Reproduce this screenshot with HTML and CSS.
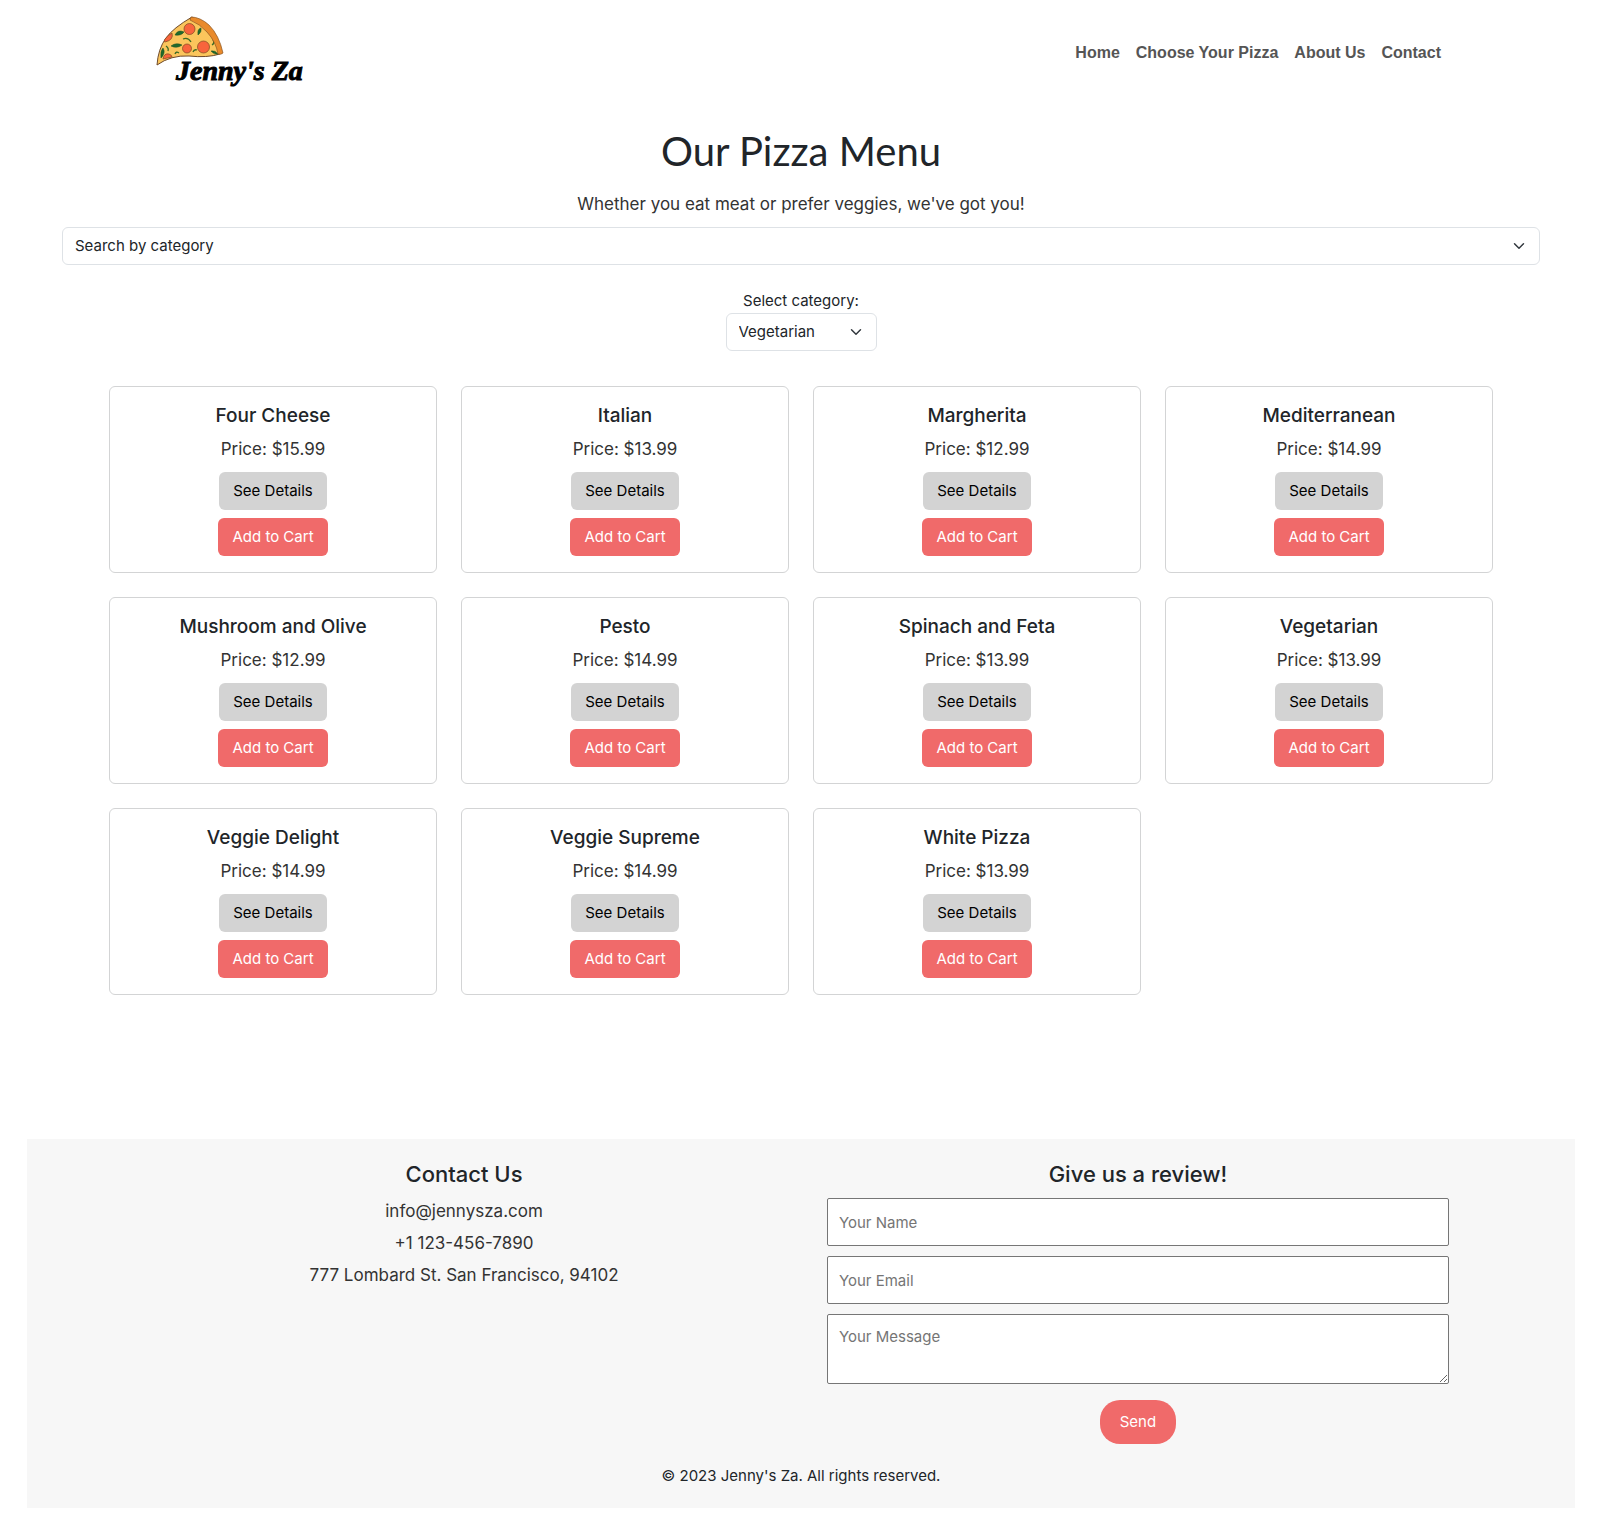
FILE: index.html
```html
<!DOCTYPE html>
<html lang="en">
<head>
<meta charset="utf-8">
<meta name="viewport" content="width=device-width, initial-scale=1">
<title>Jenny's Za - Our Pizza Menu</title>
<link rel="stylesheet" href="styles.css">
</head>
<body>
<header class="site-header">
  <a class="logo" href="#" aria-label="Jenny's Za">
    <svg class="logo-art" width="150" height="90" viewBox="0 0 150 90" aria-hidden="true">
      <path d="M39 16 Q20 27 13 37 Q5 48 4 64 Q18 54 36 55 Q54 57 67 53 Q66 40 57 30 Q49 21 39 16Z" fill="#fbc55c" stroke="#6e4a2b" stroke-width="1"/>
      <g fill="#f8643c" stroke="#7d4a22" stroke-width=".7">
        <circle cx="36.500" cy="28" r="5.500"/>
        <circle cx="50.500" cy="46" r="6"/>
        <circle cx="34" cy="47.500" r="4.500"/>
        <path d="M12 38 Q15 34 19 32 Q21 39 12 41 Q10 41 12 38Z"/>
        <path d="M10 58 Q11 52 16 53 Q19 54 19 56 Q14 57 10 58Z"/>
      </g>
      <g fill="#1f6b2c" stroke="#174d20" stroke-width=".5">
        <path d="M22 34 Q25 28 31 31 Q28 35 22 34Z"/>
        <path d="M45 34 Q44 28 48 27 Q49 31 45 34Z"/>
        <path d="M18 45 Q23 41 29 44 Q24 48 18 45Z"/>
        <path d="M8 57 Q7 50 10 47 Q13 52 8 57Z"/>
        <path d="M58 50 Q62 49 65 53 Q61 54 58 50Z"/>
      </g>
      <path d="M30 38 Q35 36 38 41 M59 44 Q62 42 60 39 M13 45 Q16 47 15 50 M40 51 Q41 48 44 49 M22 53 Q23 50 26 52" fill="none" stroke="#3c6b25" stroke-width="1.300"/>
      <path d="M38 16 Q47 16 56 24 Q66 34 70 52 Q68 54 65 53 Q63 41 54 31 Q47 23 37 19Z" fill="#e98a2b" stroke="#8a5423" stroke-width=".7"/>
      <text class="logo-name" x="23" y="79">Jenny's Za</text>
    </svg>
  </a>
  <nav class="site-nav">
    <a href="#">Home</a>
    <a href="#">Choose Your Pizza</a>
    <a href="#">About Us</a>
    <a href="#contact">Contact</a>
  </nav>
</header>

<main class="menu">
  <h1 class="menu-title">Our Pizza Menu</h1>
  <p class="text menu-intro">Whether you eat meat or prefer veggies, we've got you!</p>
  <select class="select" aria-label="Search by category">
    <option>Search by category</option>
  </select>
  <div class="category">
    <label for="category">Select category:</label>
    <select class="select select-small" id="category">
      <option>Vegetarian</option>
    </select>
  </div>
  <div class="cards">
    <article class="card"><h2 class="card-title">Four Cheese</h2><p class="text card-price">Price: $15.99</p><button class="btn btn-details">See Details</button><button class="btn btn-cart">Add to Cart</button></article>
    <article class="card"><h2 class="card-title">Italian</h2><p class="text card-price">Price: $13.99</p><button class="btn btn-details">See Details</button><button class="btn btn-cart">Add to Cart</button></article>
    <article class="card"><h2 class="card-title">Margherita</h2><p class="text card-price">Price: $12.99</p><button class="btn btn-details">See Details</button><button class="btn btn-cart">Add to Cart</button></article>
    <article class="card"><h2 class="card-title">Mediterranean</h2><p class="text card-price">Price: $14.99</p><button class="btn btn-details">See Details</button><button class="btn btn-cart">Add to Cart</button></article>
    <article class="card"><h2 class="card-title">Mushroom and Olive</h2><p class="text card-price">Price: $12.99</p><button class="btn btn-details">See Details</button><button class="btn btn-cart">Add to Cart</button></article>
    <article class="card"><h2 class="card-title">Pesto</h2><p class="text card-price">Price: $14.99</p><button class="btn btn-details">See Details</button><button class="btn btn-cart">Add to Cart</button></article>
    <article class="card"><h2 class="card-title">Spinach and Feta</h2><p class="text card-price">Price: $13.99</p><button class="btn btn-details">See Details</button><button class="btn btn-cart">Add to Cart</button></article>
    <article class="card"><h2 class="card-title">Vegetarian</h2><p class="text card-price">Price: $13.99</p><button class="btn btn-details">See Details</button><button class="btn btn-cart">Add to Cart</button></article>
    <article class="card"><h2 class="card-title">Veggie Delight</h2><p class="text card-price">Price: $14.99</p><button class="btn btn-details">See Details</button><button class="btn btn-cart">Add to Cart</button></article>
    <article class="card"><h2 class="card-title">Veggie Supreme</h2><p class="text card-price">Price: $14.99</p><button class="btn btn-details">See Details</button><button class="btn btn-cart">Add to Cart</button></article>
    <article class="card"><h2 class="card-title">White Pizza</h2><p class="text card-price">Price: $13.99</p><button class="btn btn-details">See Details</button><button class="btn btn-cart">Add to Cart</button></article>
  </div>
</main>

<footer class="site-footer" id="contact">
  <div class="footer-columns">
    <section class="footer-column">
      <h2 class="footer-title">Contact Us</h2>
      <p class="text footer-line">info@jennysza.com</p>
      <p class="text footer-line">+1 123-456-7890</p>
      <p class="text footer-line">777 Lombard St. San Francisco, 94102</p>
    </section>
    <section class="footer-column">
      <h2 class="footer-title">Give us a review!</h2>
      <form class="review">
        <input class="field" type="text" placeholder="Your Name" aria-label="Your Name">
        <input class="field" type="email" placeholder="Your Email" aria-label="Your Email">
        <textarea class="field field-message" placeholder="Your Message" aria-label="Your Message"></textarea>
        <button class="send" type="submit">Send</button>
      </form>
    </section>
  </div>
  <p class="copyright">© 2023 Jenny's Za. All rights reserved.</p>
</footer>
</body>
</html>
```

FILE: styles.css
```css
*, *::before, *::after { box-sizing: border-box; }

body {
  margin: 0;
  padding: 0 27px 27px;
  background: #fff;
  color: #212529;
  font-family: Inter, "Liberation Sans", sans-serif;
  font-size: 15px;
  line-height: 24px;
}

h1, h2, p { margin: 0; }

button, input, select, textarea {
  font: inherit;
}

.text {
  color: #333;
  font-size: 17px;
  line-height: 26px;
}

/* Header */
.site-header {
  display: flex;
  align-items: center;
  justify-content: space-between;
  max-width: 1296px;
  height: 105px;
  margin: 0 auto;
  padding-top: 1px;
}

.logo { align-self: flex-start; }

.logo-art { display: block; }

.logo-name {
  fill: #000;
  stroke: #000;
  stroke-width: 1px;
  font-family: "Liberation Serif", serif;
  font-size: 28px;
  font-style: italic;
  font-weight: 700;
}

.site-nav { display: flex; }

.site-nav a {
  padding: 8px;
  color: #555;
  font-family: "Liberation Sans", Arial, sans-serif;
  font-size: 16px;
  font-weight: 700;
  text-decoration: none;
}

/* Menu */
.menu {
  padding: 22px 35px 144px;
  text-align: center;
}

.menu-title {
  margin-bottom: 16px;
  font-family: Lato, sans-serif;
  font-size: 40px;
  font-weight: 400;
  line-height: 48px;
}

.menu-intro { margin-bottom: 10px; }

.select {
  display: block;
  width: 100%;
  height: 38px;
  padding: 6px 36px 6px 12px;
  border: 1px solid #dee2e6;
  border-radius: 6px;
  appearance: none;
  background: #fff url("data:image/svg+xml,%3csvg xmlns='http://www.w3.org/2000/svg' viewBox='0 0 16 16'%3e%3cpath fill='none' stroke='%23343a40' stroke-linecap='round' stroke-linejoin='round' stroke-width='2' d='m2 5 6 6 6-6'/%3e%3c/svg%3e") no-repeat right 12px center / 16px 12px;
  color: #212529;
}

.category {
  display: flex;
  flex-direction: column;
  align-items: center;
  margin: 24px 0 35px;
}

.select-small { width: 151px; }

.cards {
  display: grid;
  grid-template-columns: repeat(4, 1fr);
  gap: 24px;
  padding: 0 47px;
}

.card {
  display: flex;
  flex-direction: column;
  align-items: center;
  padding: 17px 16px 16px;
  border: 1px solid #d3d4d5;
  border-radius: 6px;
}

.card-title {
  margin-bottom: 8px;
  font-size: 19px;
  font-weight: 500;
  line-height: 24px;
}

.card-price { margin-bottom: 10px; }

.btn {
  height: 38px;
  padding: 7px 14px;
  border: 0;
  border-radius: 6px;
}

.btn-details {
  margin-bottom: 8px;
  background: #d3d3d3;
  color: #000;
}

.btn-cart {
  background: #f06a6a;
  color: #fff;
}

/* Footer */
.site-footer {
  padding: 20px 24px;
  background: #f7f7f7;
  text-align: center;
}

.footer-columns {
  display: flex;
  justify-content: space-between;
  max-width: 1296px;
  margin: 0 auto 20px;
}

.footer-column { width: 48%; }

.footer-title {
  margin-bottom: 9px;
  font-size: 22px;
  font-weight: 500;
  line-height: 30px;
}

.footer-line { margin-bottom: 6px; }

.review {
  display: flex;
  flex-direction: column;
  align-items: center;
  gap: 10px;
}

.field {
  display: block;
  width: 100%;
  height: 48px;
  padding: 10px 11px;
  border: 1px solid #767676;
  border-radius: 2px;
  background: #fff;
}

.field::placeholder { color: #757575; }

.field-message {
  height: 70px;
  resize: vertical;
}

.send {
  margin-top: 6px;
  padding: 10px 20px;
  border: 0;
  border-radius: 20px;
  background: #f06a6a;
  color: #fff;
}
```
